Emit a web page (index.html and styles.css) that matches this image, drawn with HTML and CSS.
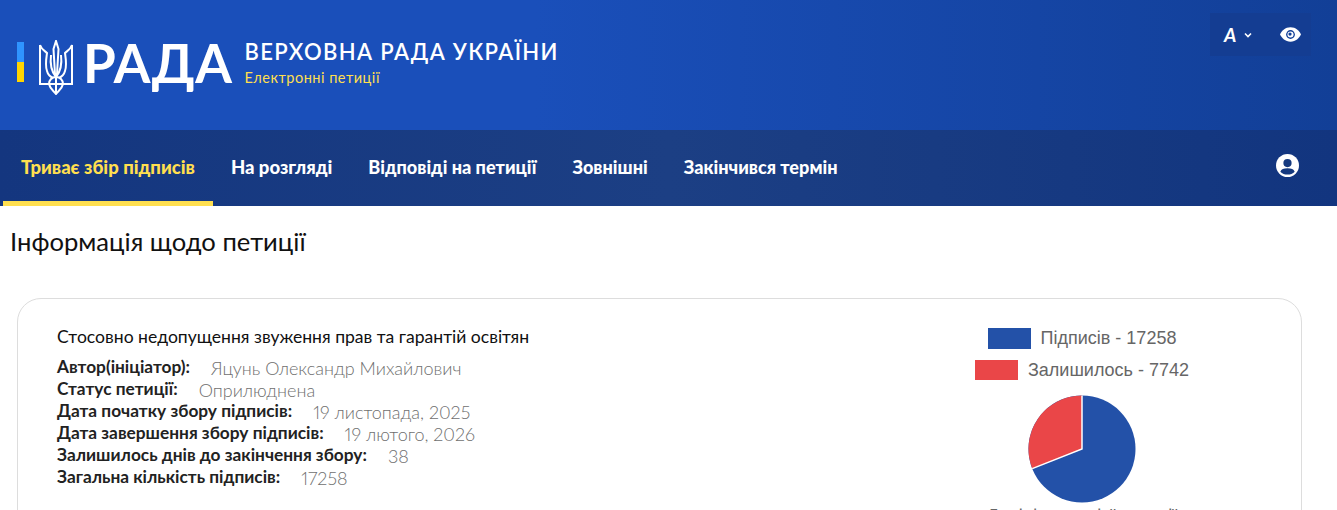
FILE: index.html
```html
<!DOCTYPE html>
<html lang="uk">
  <head>
    <meta charset="UTF-8" />
    <meta name="viewport" content="width=device-width, initial-scale=1.0" />
    <title>Електронні петиції</title>
    <link rel="stylesheet" href="styles.css">
  </head>
  <body>
    <header class="top-header">
      <div class="brand">
        <span class="flag-bar"></span>
        <svg class="trident" viewBox="0 0 34 55" fill="none" stroke="#fff" stroke-width="2">
          <!-- side frame and base -->
          <path d="M1 5 L1 44 L33 44 L33 5 C32 9 28 11 26 13 C27 20 28 26 26 31 C25 35 22 37 20 38" />
          <path d="M1 5 C2 9 6 11 8 13 C7 20 6 26 8 31 C9 35 12 37 14 38" />
          <!-- centre spike -->
          <path d="M17 1 L14.500 9 L16 34 L18 34 L19.500 9 Z" />
          <!-- inner prongs -->
          <path d="M12 15 C11 23 12 31 17 37 C22 31 23 23 22 15" />
          <!-- lower shield -->
          <path d="M10 44 C10 40 13 37 17 37 C21 37 24 40 24 44" />
          <path d="M10 44 C11 49 15 51 17 54 C19 51 23 49 24 44" />
          <path d="M17 37 L17 54" />
        </svg>
        <span class="brand-name">РАДА</span>
        <div class="brand-text">
          <div class="brand-title">ВЕРХОВНА РАДА УКРАЇНИ</div>
          <div class="brand-sub">Електронні петиції</div>
        </div>
      </div>
      <div class="tools">
        <span class="font-btn">A</span>
        <svg class="chevron" viewBox="0 0 8 6" fill="none" stroke="#fff" stroke-width="1.6">
          <path d="M1 1.500 L4 4.500 L7 1.500" />
        </svg>
        <svg class="eye" viewBox="0 0 22 15">
          <path fill="#fff" d="M11 0 C5.500 0 1.800 3.800 0 7.500 C1.800 11.200 5.500 15 11 15 C16.500 15 20.200 11.200 22 7.500 C20.200 3.800 16.500 0 11 0 Z" />
          <circle cx="11" cy="7.500" r="4.600" fill="#123f97" />
          <circle cx="11" cy="7.500" r="3.200" fill="#fff" />
          <circle cx="10.500" cy="7" r="1.700" fill="#123f97" />
        </svg>
      </div>
    </header>

    <nav class="main-nav">
      <a class="nav-link active" href="#">Триває збір підписів</a>
      <a class="nav-link" href="#">На розгляді</a>
      <a class="nav-link nav-link-tight" href="#">Відповіді на петиції</a>
      <a class="nav-link nav-link-tight" href="#">Зовнішні</a>
      <a class="nav-link nav-link-tight" href="#">Закінчився термін</a>
      <svg class="user-icon" viewBox="0 0 24 24">
        <circle cx="12" cy="12" r="12" fill="#fff" />
        <circle cx="12" cy="9.500" r="4.300" fill="#15397f" />
        <path fill="#15397f" d="M4.500 18.500 C5.500 15.500 8 14.800 12 14.800 C16 14.800 18.500 15.500 19.500 18.500 C17.500 20.700 15 21.500 12 21.500 C9 21.500 6.500 20.700 4.500 18.500 Z" />
      </svg>
    </nav>

    <main class="content">
      <h1 class="page-title">Інформація щодо петиції</h1>

      <section class="petition-card">
        <div class="petition-info">
          <p class="petition-subject">Стосовно недопущення звуження прав та гарантій освітян</p>
          <div class="info-row"><b>Автор(ініціатор):</b><span>Яцунь Олександр Михайлович</span></div>
          <div class="info-row"><b>Статус петиції:</b><span>Оприлюднена</span></div>
          <div class="info-row"><b>Дата початку збору підписів:</b><span>19 листопада, 2025</span></div>
          <div class="info-row"><b>Дата завершення збору підписів:</b><span>19 лютого, 2026</span></div>
          <div class="info-row"><b>Залишилось днів до закінчення збору:</b><span>38</span></div>
          <div class="info-row"><b>Загальна кількість підписів:</b><span>17258</span></div>
        </div>

        <div class="chart">
          <div class="legend-item"><span class="swatch swatch-blue"></span>Підписів - 17258</div>
          <div class="legend-item"><span class="swatch swatch-red"></span>Залишилось - 7742</div>
          <svg class="pie" viewBox="0 0 110 110">
            <circle cx="55" cy="55" r="54.500" fill="#2351a8" />
            <path d="M55 55 L55 0.500 A54.500 54.500 0 0 0 4.300 75 Z" fill="#ea4648" />
            <path d="M55 0.500 L55 55 L4.300 75" fill="none" stroke="#fff" stroke-width="1.500" />
          </svg>
          <div class="chart-note">Дані фонду цієї петиції</div>
        </div>
      </section>
    </main>
  </body>
</html>
```

FILE: styles.css
```css
* {
  margin: 0;
  padding: 0;
  box-sizing: border-box;
}

html,
body {
  height: 510px;
  overflow: hidden;
}

body {
  font-family: Lato, "Open Sans", sans-serif;
  font-variant-numeric: proportional-nums;
  background: #fff;
  color: #111;
}

.top-header {
  height: 130px;
  padding: 13px 26px 0 17px;
  display: flex;
  justify-content: space-between;
  align-items: flex-start;
  background: linear-gradient(90deg, #1a4fba 0%, #1a4fba 40%, #123f97 100%);
}

.brand {
  display: flex;
  align-items: center;
  height: 80px;
  margin-top: 9px;
}

.flag-bar {
  width: 7px;
  height: 40px;
  background: linear-gradient(#2f94ff 50%, #ffd500 50%);
}

.trident {
  width: 34px;
  height: 55px;
  margin-left: 15px;
  margin-top: 10px;
}

.brand-name {
  margin-left: 10px;
  font-size: 53px;
  font-weight: 700;
  letter-spacing: 0.500px;
  color: #fff;
}

.brand-text {
  margin-left: 12px;
}

.brand-title {
  font-size: 22px;
  font-weight: 600;
  letter-spacing: 1.350px;
  color: #fff;
}

.brand-sub {
  margin-top: 4px;
  font-size: 14.500px;
  letter-spacing: 0.500px;
  color: #ffdf4f;
}

.tools {
  width: 101px;
  height: 43px;
  padding-left: 14px;
  display: flex;
  align-items: center;
  background: #143d92;
}

.font-btn {
  font-size: 19px;
  font-weight: 700;
  font-style: italic;
  color: #fff;
}

.chevron {
  width: 8px;
  height: 6px;
  margin-left: 8px;
}

.eye {
  width: 21px;
  height: 15px;
  margin-left: 28px;
}

.main-nav {
  height: 76px;
  padding-left: 3px;
  padding-right: 38px;
  display: flex;
  align-items: stretch;
  background: linear-gradient(90deg, #14367f 0%, #1c3f84 50%, #12357f 100%);
}

.nav-link {
  padding: 2px 18px 0;
  display: flex;
  align-items: center;
  height: 76px;
  font-size: 18.500px;
  font-weight: 900;
  color: #fff;
  text-decoration: none;
  border-bottom: 5px solid transparent;
}

.nav-link-tight {
  font-size: 18.100px;
}

.nav-link.active {
  color: #ffdf4f;
  border-bottom-color: #ffdf4f;
}

.user-icon {
  width: 23px;
  height: 23px;
  margin-left: auto;
  margin-top: 24px;
}

.content {
  padding: 0 35px 0 17px;
}

.page-title {
  margin: 20px 0 0 -7px;
  font-size: 25.600px;
  font-weight: 400;
  line-height: 30px;
}

.petition-card {
  margin-top: 42px;
  height: 300px;
  padding: 28px 39px;
  display: flex;
  justify-content: space-between;
  border: 1px solid #ddd;
  border-radius: 24px;
}

.petition-subject {
  font-size: 17.570px;
  line-height: 20px;
  margin-bottom: 9px;
}

.info-row {
  display: flex;
  height: 22px;
  font-size: 17.300px;
  line-height: 22px;
}

.info-row b {
  font-weight: 700;
  color: #222;
}

.info-row span {
  margin-left: 21px;
  padding-top: 1px;
  font-size: 18px;
  font-weight: 300;
  color: #6f6f6f;
}

.chart {
  width: 260px;
  margin-top: -5px;
  margin-right: 50px;
  display: flex;
  flex-direction: column;
  align-items: center;
  font-family: "Liberation Sans", sans-serif;
  font-size: 18px;
  color: #666;
}

.legend-item {
  height: 32px;
  display: flex;
  align-items: center;
}

.swatch {
  width: 43px;
  height: 21px;
  margin-right: 10px;
}

.swatch-blue {
  background: #2351a8;
}

.swatch-red {
  height: 20px;
  background: #ea4648;
}

.pie {
  width: 108px;
  height: 108px;
  margin-top: 9px;
}

.chart-note {
  margin-top: 3px;
}
```
